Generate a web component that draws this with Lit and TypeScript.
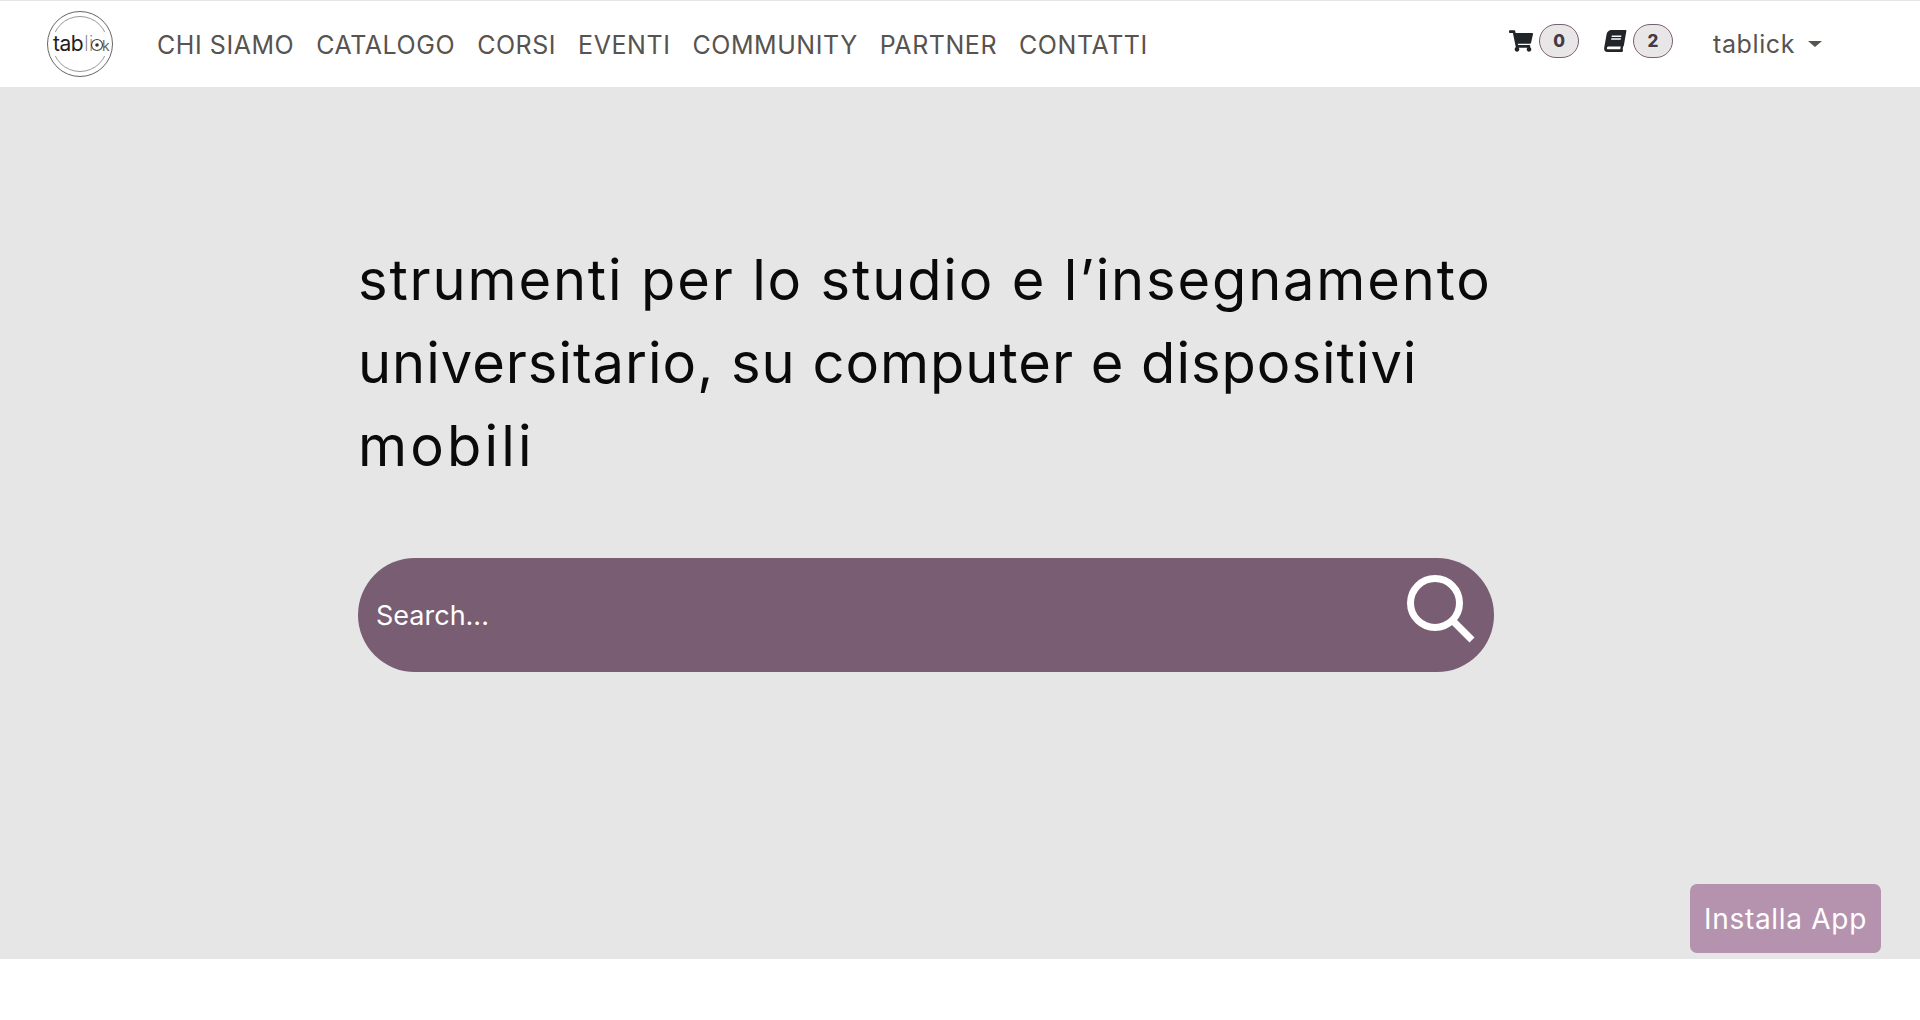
import { LitElement, html, css } from 'lit';
import { customElement } from 'lit/decorators.js';

const NAV = ['CHI SIAMO', 'CATALOGO', 'CORSI', 'EVENTI', 'COMMUNITY', 'PARTNER', 'CONTATTI'];

@customElement('app-root')
export class AppRoot extends LitElement {
  static styles = css`
    :host {
      display: block;
      height: 1020px;
      background: #fff;
      font-family: Inter, 'Noto Sans', sans-serif;
      position: relative;
      overflow: hidden;
    }

    .topbar {
      height: 86px;
      border-top: 1px solid #e5e5e5;
      display: flex;
      align-items: center;
      padding-left: 46px;
      background: #fff;
    }

    .logo {
      width: 68px;
      height: 68px;
      margin-right: 43px;
      flex: none;
    }

    .logo text {
      font-family: Inter, sans-serif;
    }

    .logo .word {
      font-size: 21px;
      letter-spacing: -0.5px;
    }

    .logo .thin {
      font-size: 21px;
      font-weight: 200;
    }

    .logo .end {
      font-size: 14px;
    }

    nav {
      display: flex;
      gap: 22px;
      font-size: 25px;
      color: #57534f;
      letter-spacing: 0.55px;
      padding-top: 1px;
    }

    .tools {
      margin-left: auto;
      display: flex;
      align-items: center;
      margin-right: 98px;
    }

    .tool {
      display: flex;
      align-items: center;
      gap: 6px;
      margin-right: 24px;
      margin-top: -6px;
    }

    .tool svg {
      width: 24px;
      height: 22px;
      fill: #212529;
    }

    .count {
      width: 40px;
      height: 34px;
      box-sizing: border-box;
      border: 1px solid #7b5d73;
      border-radius: 17px;
      background: #e9e6e8;
      display: flex;
      align-items: center;
      justify-content: center;
      font-size: 17px;
      font-weight: 800;
      color: #453a42;
    }

    .user {
      display: flex;
      align-items: center;
      gap: 13px;
      margin-left: 16px;
      font-size: 25px;
      letter-spacing: 0.6px;
      color: #57534f;
    }

    .caret {
      width: 0;
      height: 0;
      border-top: 6px solid #57534f;
      border-left: 7px solid transparent;
      border-right: 7px solid transparent;
    }

    main {
      height: 872px;
      background: #e6e6e6;
      box-sizing: border-box;
      padding: 152px 0 0 358px;
    }

    h1 {
      margin: 0;
      font-size: 56px;
      font-weight: 400;
      line-height: 83px;
      color: #0a0a0a;
    }

    h1 span {
      display: block;
    }

    .l1 {
      letter-spacing: 1.85px;
    }

    .l2 {
      letter-spacing: 1px;
    }

    .l3 {
      letter-spacing: 3.2px;
    }

    .search {
      margin-top: 70px;
      width: 1136px;
      height: 114px;
      border-radius: 57px;
      background: #785d73;
      display: flex;
      align-items: center;
      justify-content: space-between;
      padding: 0 17px 0 18px;
      box-sizing: border-box;
      color: #fff;
      font-size: 27px;
    }

    .search svg {
      width: 72px;
      height: 72px;
      margin-bottom: 12px;
      fill: none;
      stroke: #fff;
    }

    .install {
      position: absolute;
      left: 1690px;
      top: 884px;
      width: 191px;
      height: 69px;
      border-radius: 7px;
      background: #b593ae;
      color: #fff;
      font-size: 28px;
      letter-spacing: 0.7px;
      display: flex;
      align-items: center;
      justify-content: center;
    }
  `;

  render() {
    return html`
      <header class="topbar">
        <svg class="logo" viewBox="0 0 68 68">
          <circle cx="34" cy="34" r="27.500" fill="none" stroke="#999" stroke-width="1"></circle>
          <rect x="2" y="22" width="64" height="24" fill="#fff"></rect>
          <circle cx="34" cy="34" r="32.500" fill="none" stroke="#666" stroke-width="1"></circle>
          <text class="word" x="7" y="41" fill="#222">tab</text>
          <text class="thin" x="38" y="41" fill="#777">li</text>
          <circle cx="51" cy="35" r="5.500" fill="none" stroke="#444" stroke-width="1.200"></circle>
          <circle cx="51" cy="35" r="1.800" fill="#333"></circle>
          <text class="end" x="56" y="41" fill="#666">k</text>
        </svg>
        <nav>${NAV.map((n) => html`<span>${n}</span>`)}</nav>
        <div class="tools">
          <div class="tool">
            <svg viewBox="0 0 576 512"><path d="M528 301.3l47.3-208C578.7 78.3 567.2 64 552 64H159.200l-9.200-44.800C147.800 8 137.900 0 126.500 0H24C10.700 0 0 10.700 0 24v16c0 13.300 10.700 24 24 24h69.900l70.200 343.400C147.300 417.100 136 435.200 136 456c0 30.900 25.100 56 56 56s56-25.100 56-56c0-15.700-6.400-29.800-16.800-40h209.600C430.400 426.200 424 440.300 424 456c0 30.900 25.100 56 56 56s56-25.100 56-56c0-22.200-12.900-41.300-31.600-50.400l5.500-24.300c3.400-15-8.100-29.300-23.400-29.300H218.100l-6.500-32h293c11.200 0 20.900-7.800 23.400-18.700z"></path></svg>
            <span class="count">0</span>
          </div>
          <div class="tool">
            <svg viewBox="0 0 538 512"><path d="M448 360V24c0-13.300-10.700-24-24-24H96C43 0 0 43 0 96v320c0 53 43 96 96 96h328c13.300 0 24-10.700 24-24v-16c0-7.500-3.500-14.300-8.900-18.700-4.200-15.400-4.200-59.300 0-74.700 5.400-4.300 8.900-11.100 8.900-18.600zM128 134c0-3.300 2.700-6 6-6h212c3.300 0 6 2.700 6 6v20c0 3.300-2.700 6-6 6H134c-3.300 0-6-2.700-6-6v-20zm0 64c0-3.300 2.700-6 6-6h212c3.300 0 6 2.700 6 6v20c0 3.300-2.700 6-6 6H134c-3.300 0-6-2.700-6-6v-20zm253.400 250H96c-17.700 0-32-14.300-32-32 0-17.600 14.400-32 32-32h285.400c-1.900 17.100-1.900 46.900 0 64z" transform="translate(90 0) skewX(-10)"></path></svg>
            <span class="count">2</span>
          </div>
          <div class="user"><span>tablick</span><span class="caret"></span></div>
        </div>
      </header>
      <main>
        <h1>
          <span class="l1">strumenti per lo studio e l’insegnamento</span>
          <span class="l2">universitario, su computer e dispositivi</span>
          <span class="l3">mobili</span>
        </h1>
        <div class="search">
          <span>Search...</span>
          <svg viewBox="0 0 72 72">
            <circle cx="30" cy="30" r="24.500" stroke-width="7"></circle>
            <path d="M48 48 L67 67" stroke-width="7"></path>
          </svg>
        </div>
      </main>
      <div class="install">Installa App</div>
    `;
  }
}
